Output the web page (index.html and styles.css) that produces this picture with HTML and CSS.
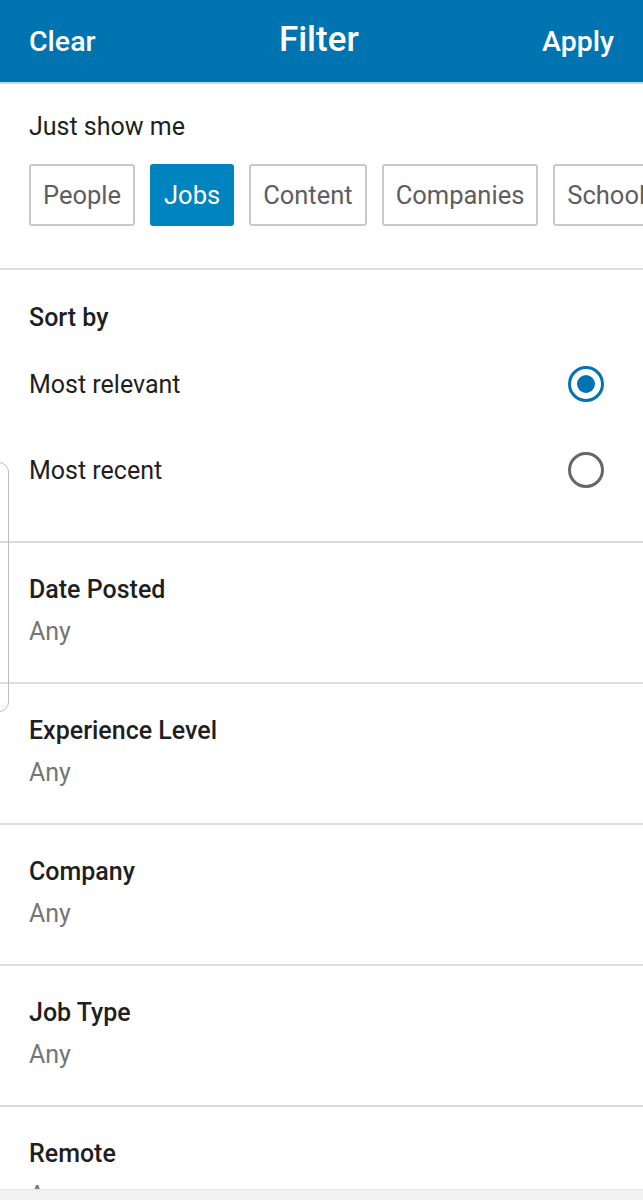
FILE: index.html
```html
<!DOCTYPE html>
<html>
<head>
<meta charset="utf-8">
<link rel="stylesheet" href="styles.css">
</head>
<body>
<header class="topbar">
  <span class="tb-btn">Clear</span>
  <span class="tb-title">Filter</span>
  <span class="tb-btn">Apply</span>
</header>
<section class="show">
  <div class="label">Just show me</div>
  <div class="chips">
    <span class="chip">People</span>
    <span class="chip active">Jobs</span>
    <span class="chip">Content</span>
    <span class="chip">Companies</span>
    <span class="chip">Schools</span>
  </div>
</section>
<section class="sort">
  <div class="label strong">Sort by</div>
  <div class="opts">
    <div class="opt"><span>Most relevant</span><span class="radio on"></span></div>
    <div class="opt"><span>Most recent</span><span class="radio"></span></div>
  </div>
</section>
<section class="item"><div class="title">Date Posted</div><div class="val">Any</div></section>
<section class="item"><div class="title">Experience Level</div><div class="val">Any</div></section>
<section class="item"><div class="title">Company</div><div class="val">Any</div></section>
<section class="item"><div class="title">Job Type</div><div class="val">Any</div></section>
<section class="item"><div class="title">Remote</div><div class="val">Any</div></section>
<div class="edge"></div>
<div class="bottombar"></div>
</body>
</html>
```
FILE: styles.css
```css
html, body { margin: 0; padding: 0; }
body {
  width: 643px;
  height: 1200px;
  overflow: hidden;
  background: #fff;
  font-family: Roboto, "Noto Sans", sans-serif;
  color: #1f1f1f;
  position: relative;
}
.topbar {
  height: 82px;
  background: #0073b1;
  border-bottom: 2px solid #b9dcef;
  display: flex;
  align-items: center;
  justify-content: space-between;
  padding: 0 29px;
  color: #fff;
}
.tb-btn { font-size: 28.5px; font-weight: 500; }
.tb-title { font-size: 35px; font-weight: 500; margin-top: -4px; }
.show {
  padding: 28px 0 0 29px;
  height: 186px;
  box-sizing: border-box;
  border-bottom: 2px solid #dcdcdc;
  white-space: nowrap;
  overflow: hidden;
}
.label { font-size: 25px; line-height: 30px; }
.strong { font-weight: 500; }
.chips { display: flex; gap: 15px; margin-top: 22px; }
.chip {
  flex: none;
  height: 62px;
  box-sizing: border-box;
  border: 2px solid #c8c8c8;
  border-radius: 3px;
  padding: 0 12px;
  display: flex;
  align-items: center;
  font-size: 25.5px;
  color: #5e5e5e;
}
.chip.active { background: #0084bf; border-color: #0084bf; color: #fff; }
.sort {
  padding: 33px 39px 0 29px;
  height: 273px;
  box-sizing: border-box;
  border-bottom: 2px solid #dcdcdc;
}
.opts { margin-top: 8px; }
.opt {
  display: flex;
  justify-content: space-between;
  align-items: center;
  height: 86px;
  font-size: 25px;
}
.radio {
  width: 36px; height: 36px;
  box-sizing: border-box;
  border: 3px solid #666;
  border-radius: 50%;
  position: relative;
}
.radio.on { border-color: #0073b1; }
.radio.on::after {
  content: "";
  position: absolute;
  left: 6px; top: 6px;
  width: 18px; height: 18px;
  border-radius: 50%;
  background: #0073b1;
}
.item {
  height: 141px;
  box-sizing: border-box;
  border-bottom: 2px solid #dcdcdc;
  padding: 32px 29px 0;
}
.title { font-size: 25px; font-weight: 500; line-height: 30px; }
.val { font-size: 25px; color: #767676; line-height: 30px; margin-top: 12px; }
.edge {
  position: absolute;
  left: -12px; top: 462px;
  width: 19px; height: 248px;
  border: 1px solid #bdbdbd;
  border-radius: 10px;
}
.bottombar {
  position: absolute;
  left: 0; right: 0; bottom: 0;
  height: 10px;
  background: #f1f1f1;
  border-top: 1px solid #e4e4e4;
}
```
